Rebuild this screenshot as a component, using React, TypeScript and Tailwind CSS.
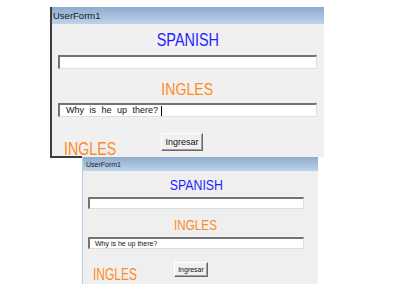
import React from 'react';

// sunken text box like the VBA form control
function TextBox({ h, children }: { h: string; children?: React.ReactNode }) {
  return (
    <div
      className={`${h} w-full bg-white border-t-2 border-l-2 border-t-[#737373] border-l-[#737373] border-r border-b border-r-[#dedede] border-b-[#dedede] flex items-center overflow-hidden`}
    >
      {children}
    </div>
  );
}

export default function App() {
  return (
    <div className="relative w-[400px] h-[300px] bg-white overflow-hidden font-['Liberation_Sans',Arial,sans-serif]">
      {/* Upper form window */}
      <div className="absolute left-[50px] top-[7px] w-[274px] h-[150px] bg-[#f0f0f0] border-l-2 border-[#3c3c3c] flex flex-col">
        <div className="h-[17px] shrink-0 bg-gradient-to-b from-[#8eaace] to-[#bdd3ea] flex items-center pl-[1px]">
          <span className="text-[9.5px] leading-none text-[#1a1a1a]">UserForm1</span>
        </div>
        <div className="flex flex-col pl-[6px] pr-[7px]">
          <span className="mt-[7px] self-center inline-block text-[18px] leading-none text-[#1f1fff] scale-x-[0.8] origin-center">
            SPANISH
          </span>
          <div className="mt-[6px]">
            <TextBox h="h-[14px]" />
          </div>
          <span className="mt-[12px] self-center inline-block text-[17px] leading-none text-[#ff8a1f] scale-x-[0.83] origin-center">
            INGLES
          </span>
          <div className="mt-[5px]">
            <TextBox h="h-[14px]">
              <span className="ml-[6px] text-[9px] leading-none text-[#111] [word-spacing:3px] whitespace-nowrap">
                Why is he up there?
              </span>
              <span className="ml-[3px] w-px h-[10px] bg-black" />
            </TextBox>
          </div>
          <div className="mt-[16px] flex items-start">
            <span className="ml-[6px] mt-[7px] w-[97px] shrink-0 inline-block text-[18px] leading-none text-[#ff8a1f] scale-x-[0.79] origin-left">
              INGLES
            </span>
            <button className="w-[42px] h-[18px] bg-[#f0f0f0] border border-t-white border-l-white border-r-[#6a6a6a] border-b-[#6a6a6a] shadow-[inset_-1px_-1px_0_#a0a0a0] text-[9px] leading-none text-[#111] flex items-center justify-center">
              Ingresar
            </button>
          </div>
        </div>
      </div>
      {/* bottom edge of the upper window, visible left of the lower one */}
      <div className="absolute left-[50px] top-[156px] w-[32px] h-[2px] bg-[#3c3c3c]" />

      {/* Lower form window */}
      <div className="absolute left-[82px] top-[157px] w-[236px] h-[127px] bg-[#efefef] border-l border-[#b9cfe6] flex flex-col">
        <div className="h-[14px] shrink-0 bg-gradient-to-b from-[#8eaace] to-[#bdd3ea] flex items-center pl-[3px]">
          <span className="text-[7px] leading-none text-[#1a1a1a]">UserForm1</span>
        </div>
        <div className="flex flex-col pl-[5px] pr-[14px]">
          <span className="mt-[6px] self-center inline-block text-[15px] leading-none text-[#1f1fff] scale-x-[0.82] origin-center">
            SPANISH
          </span>
          <div className="mt-[5px]">
            <TextBox h="h-[12px]" />
          </div>
          <span className="mt-[8px] self-center inline-block text-[15px] leading-none text-[#ff8a1f] scale-x-[0.78] origin-center">
            INGLES
          </span>
          <div className="mt-[5px]">
            <TextBox h="h-[12px]">
              <span className="ml-[5px] text-[7px] leading-none text-[#111] whitespace-nowrap">
                Why is he up there?
              </span>
            </TextBox>
          </div>
          <div className="mt-[13px] flex items-start">
            <span className="ml-[5px] mt-[5px] w-[81px] shrink-0 inline-block text-[16px] leading-none text-[#ff8a1f] scale-x-[0.75] origin-left">
              INGLES
            </span>
            <button className="w-[34px] h-[15px] bg-[#f0f0f0] border border-t-white border-l-white border-r-[#6a6a6a] border-b-[#6a6a6a] shadow-[inset_-1px_-1px_0_#a0a0a0] text-[7px] leading-none text-[#111] flex items-center justify-center">
              Ingresar
            </button>
          </div>
        </div>
      </div>
    </div>
  );
}
